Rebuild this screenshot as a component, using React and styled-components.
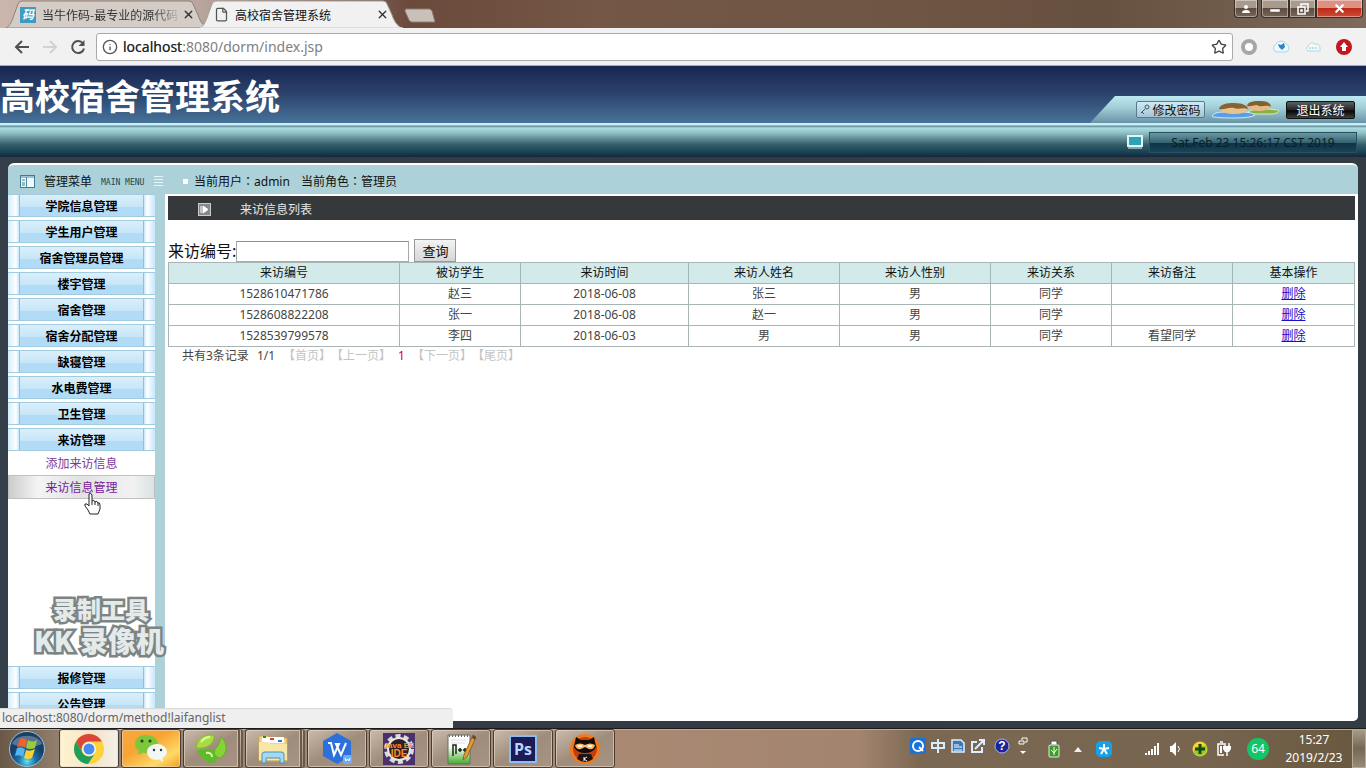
import React from "react";
import styled, { createGlobalStyle, css } from "styled-components";
import { Info, Star, X, File } from "lucide-react";

const SANS = '"Noto Sans", "Noto Sans CJK SC", sans-serif';
const CJK = '"Noto Sans CJK SC", sans-serif';

const GlobalStyle = createGlobalStyle`
  * { box-sizing: border-box; }
  body { margin: 0; font: 12px/16px ${SANS}; color: #111; background: #343c46; }
  button, input { font: inherit; color: inherit; margin: 0; }
  button { cursor: pointer; }
`;

const Screen = styled.div`
  position: relative;
  display: flex;
  flex-direction: column;
  height: 100vh;
  overflow: hidden;
`;

/* ---------- browser ---------- */
const TabStrip = styled.div`
  display: flex;
  justify-content: space-between;
  height: 28px;
  flex: none;
  background: linear-gradient(90deg, #cbb5ac 0, #b8a59c 200px, #6b4a3c 410px, #745745 600px, #6f5644 900px, #66503f 1100px, #7d6a5a 100%);
`;
const Tabs = styled.div`
  display: flex;
  padding-left: 6px;
`;
const Tab = styled.div`
  position: relative;
  z-index: ${(p) => (p.$active ? 2 : 1)};
  display: flex;
  align-items: center;
  width: 206px;
  margin-right: -12px;
  padding: 1px 17px 0 14px;
  color: ${(p) => (p.$active ? "#111" : "#333")};
  & > svg, & > span, & > button { position: relative; }
`;
const TabShape = styled.svg`
  && { position: absolute; left: 0; top: 0; }
`;
const TabTitle = styled.span`
  flex: 1;
  margin-left: 6px;
  overflow: hidden;
  white-space: nowrap;
  font-family: ${CJK};
  ${(p) => p.$fade && css`mask-image: linear-gradient(90deg, #000 80%, transparent);`}
`;
const PlainButton = styled.button`
  display: flex;
  align-items: center;
  justify-content: center;
  padding: 0;
  border: 0;
  background: none;
`;
const NewTab = styled(PlainButton)`
  margin: 8px 0 0 10px;
  height: 15px;
`;
const WindowButtons = styled.div`
  display: flex;
  align-items: flex-start;
  padding-right: 3px;
`;
const WindowButton = styled(PlainButton)`
  width: ${(p) => p.$w}px;
  height: 18px;
  margin-left: ${(p) => (p.$gap ? 3 : 0)}px;
  border: 1px solid #3b2c25;
  border-top: 0;
  box-shadow: inset 0 0 0 1px #ffffff66;
  background: ${(p) => (p.$close ? "linear-gradient(#dc9183 0 45%, #bd2a18 50%, #cf4b33)" : "linear-gradient(#a99a8e 0 45%, #5f4c40 50%, #78665a)")};
  border-radius: 0 0 ${(p) => (p.$right ? 4 : 0)}px ${(p) => (p.$left ? 4 : 0)}px;
`;
const Toolbar = styled.div`
  display: flex;
  align-items: center;
  flex: none;
  height: 38px;
  padding: 0 13px 0 14px;
  background: #f1f1f1;
  border-bottom: 1px solid #a8a8a8;
  color: #555;
`;
const NavButtons = styled.div`
  display: flex;
  gap: 12px;
  margin-right: 10px;
`;
const AddressBar = styled.label`
  display: flex;
  align-items: center;
  flex: 1;
  height: 28px;
  padding: 0 5px;
  border: 1px solid #aaa;
  border-radius: 3px;
  background: #fff;
`;
const AddressField = styled.div`
  display: grid;
  flex: 1;
  margin-left: 5px;
  font: 14px/20px "Noto Sans", sans-serif;
  & > * { grid-area: 1 / 1; }
`;
const AddressInput = styled.input`
  width: 100%;
  padding: 0;
  border: 0;
  outline: 0;
  background: none;
  color: #808080;
`;
const AddressHost = styled.span`
  color: #222;
  pointer-events: none;
`;
const Extensions = styled.div`
  display: flex;
  gap: 14px;
  margin-left: 7px;
`;

/* ---------- site header ---------- */
const Banner = styled.header`
  display: flex;
  justify-content: space-between;
  align-items: flex-end;
  flex: none;
  height: 57px;
  background: linear-gradient(#172650, #2c446d 50%, #47739a);
`;
const SiteTitle = styled.h1`
  margin: 0;
  align-self: center;
  font: bold 35px/44px ${CJK};
  color: #fff;
`;
const UserTools = styled.div`
  display: flex;
  align-items: center;
  height: 27px;
  padding: 0 11px 0 46px;
  gap: 6px;
  clip-path: polygon(25px 0, 100% 0, 100% 100%, 0 100%);
  background: linear-gradient(#bdeaf2, #a0ccd6 45%, #6793a6);
`;
const PasswordButton = styled(PlainButton)`
  width: 69px;
  height: 17px;
  gap: 2px;
  border: 1px solid #557a91;
  border-radius: 2px;
  background: linear-gradient(#d2eaf4, #a3c4d4);
  font-family: ${CJK};
`;
const LogoutButton = styled(PlainButton)`
  width: 69px;
  height: 18px;
  border: 1px solid #111;
  border-radius: 2px;
  background: linear-gradient(#5b6063, #222 50%, #050505 55%, #3c4245);
  color: #fff;
  font-family: ${CJK};
`;
const TimeBar = styled.div`
  display: flex;
  justify-content: flex-end;
  align-items: center;
  flex: none;
  height: 34px;
  padding: 4px 9px 0 0;
  gap: 6px;
  background: linear-gradient(#c6eefb 0 2px, #5e8490 3px, #a9dde2 5px, #8fbfc5 10px, #608b94 16px, #315b68 22px, #1a4256 29px, #14283a 34px);
`;
const TimeBox = styled.div`
  width: 208px;
  height: 21px;
  border: 1px solid #2c4f5c;
  background: linear-gradient(#6a98a3, #356373 50%, #0f3448 55%, #18445a);
  font: 12px/20px "Noto Sans", sans-serif;
  text-align: center;
  color: #0c1d26;
`;

/* ---------- main panel ---------- */
const Frame = styled.div`
  display: flex;
  flex: 1;
  min-height: 0;
  padding: 6px 8px 7px;
  background: linear-gradient(90deg, #343e49, #343a45 50%, #333c43);
`;
const Panel = styled.div`
  display: flex;
  flex-direction: column;
  flex: 1;
  min-width: 0;
  overflow: hidden;
  border-top: 2px solid #fff;
  border-radius: 6px 6px 5px 5px;
  background: #acd1d8;
`;
const PanelBar = styled.div`
  display: flex;
  align-items: center;
  flex: none;
  height: 29px;
  padding: 3px 12px 0;
  white-space: pre;
`;
const MenuHeading = styled.div`
  display: flex;
  align-items: center;
  width: 163px;
  font-family: ${CJK};
`;
const MenuTitle = styled.span`
  margin-left: 8px;
`;
const MenuCaption = styled.small`
  margin: 3px 10px 0 9px;
  font: 8px/10px "DejaVu Sans Mono", monospace;
  color: #23454f;
`;
const Bullet = styled.i`
  width: 5px;
  height: 5px;
  margin-right: 6px;
  background: #fff;
`;
const SessionInfo = styled.div`
  display: flex;
  gap: 11px;
`;
const Colon = styled.span`
  font-family: "Noto Sans CJK TC", sans-serif;
`;
const Columns = styled.div`
  display: flex;
  flex: 1;
  min-height: 0;
`;
const Sidebar = styled.nav`
  width: 147px;
  flex: none;
  overflow: hidden;
  background: #fff;
`;
const MenuButton = styled.button`
  display: block;
  width: 100%;
  height: 23px;
  margin-bottom: 3px;
  padding: 0 11px;
  border: solid #a3cbe0;
  border-width: 1px 0;
  background: linear-gradient(90deg, #d3ecfc, #fff 8px, #c3e5fa 11px, #c3e5fa 136px, #fff 139px, #c8e7fb);
`;
const MenuLabel = styled.span`
  display: block;
  height: 21px;
  border: solid #8fc0e2;
  border-width: 0 1px;
  background: linear-gradient(#dbeffa, #c6e6f8 55%, #b2dbf5 60%, #b0dcf8);
  font: bold 12px/21px ${CJK};
  color: #000;
`;
const SubMenu = styled.div`
  height: 215px;
  margin-top: -3px;
`;
const SubLink = styled.a`
  display: block;
  height: 24px;
  border: 1px solid ${(p) => (p.$hover ? "#c0c0c0" : "transparent")};
  background: ${(p) => (p.$hover ? "linear-gradient(90deg, #ccc, #f4f4f4 20%, #e2e2e2 50%, #f2f2f2 85%, #d9e3e4)" : "none")};
  font: 12px/22px ${CJK};
  text-align: center;
  text-decoration: none;
  color: ${(p) => (p.$hover ? "#76209a" : "#7d3a96")};
`;
const Content = styled.main`
  flex: 1;
  min-width: 0;
  margin-left: 10px;
  padding: 2px 3px;
  background: #fff;
`;
const ListTitle = styled.h2`
  display: flex;
  align-items: center;
  gap: 29px;
  height: 24px;
  margin: 0 0 19px;
  padding: 2px 0 0 30px;
  background: #35393c;
  color: #e4e8e8;
  font: 12px/16px ${CJK};
`;
const SearchForm = styled.form`
  display: flex;
  align-items: flex-end;
  height: 23px;
  font: 16px/24px ${CJK};
`;
const SearchInput = styled.input`
  width: 173px;
  height: 21px;
  border: 1px solid #a9a9a9;
  border-top-color: #8f8f8f;
`;
const SearchButton = styled.button`
  width: 42px;
  height: 23px;
  margin-left: 5px;
  padding: 0;
  border: 1px solid #999;
  background: linear-gradient(#f3f3f3, #d6d6d6);
  font: 13px/20px ${CJK};
`;
const VisitTable = styled.table`
  width: 100%;
  table-layout: fixed;
  border-collapse: collapse;
  text-align: center;
  color: #444;
`;
const Cell = styled.td`
  height: 21px;
  padding: 0;
  border: 1px solid #a9b4b4;
  line-height: 20px;
`;
const HeadCell = styled(Cell)`
  font-weight: normal;
  color: #111;
  background: #d2ebea;
`;
const DeleteLink = styled.a`
  color: #1a0dcc;
  text-decoration: underline;
`;
const Pager = styled.div`
  display: flex;
  padding: 0 14px;
  line-height: 18px;
  color: #444;
  white-space: pre;
`;
const PagerText = styled.span`
  width: ${(p) => p.$w}px;
  color: ${(p) => (p.$current ? "#d80040" : p.$off ? "#c4c4c4" : "inherit")};
`;

/* ---------- overlays ---------- */
const StatusBubble = styled.div`
  position: absolute;
  left: 0;
  bottom: 40px;
  width: 453px;
  height: 20px;
  padding-left: 2px;
  border-top: 1px solid #d8d8d8;
  border-radius: 0 4px 0 0;
  background: #efefef;
  color: #666;
  line-height: 18px;
`;
const Watermark = styled.div`
  position: absolute;
  left: 34px;
  top: 594px;
  display: flex;
  flex-direction: column;
  font: 900 24px/30px ${CJK};
  color: #e4eaea;
  -webkit-text-stroke: 5px #7d8484;
  stroke-linejoin: round;
  paint-order: stroke fill;
  white-space: nowrap;
`;
const WatermarkLine = styled.span`
  padding-left: ${(p) => (p.$big ? 0 : 19)}px;
  font-size: ${(p) => (p.$big ? 28 : 24)}px;
  line-height: ${(p) => (p.$big ? 32 : 30)}px;
`;
const Pointer = styled.svg`
  position: absolute;
  left: 83px;
  top: 492px;
`;

/* ---------- taskbar ---------- */
const Taskbar = styled.footer`
  display: flex;
  flex: none;
  height: 40px;
  border-top: 1px solid #1d1a18;
  box-shadow: inset 0 1px 0 #bba99a;
  background: linear-gradient(90deg, #6a5848 0, #93806f 60px, #a58d79 500px, #a98972 620px, #a3846f 860px, #7b6852 920px, #776550 1200px, #69583f 100%);
`;
const StartButton = styled(PlainButton)`
  width: 57px;
  padding-right: 3px;
`;
const TaskButton = styled(PlainButton)`
  width: 60px;
  height: 39px;
  margin-left: 2px;
  border: 1px solid #4a3c31;
  border-radius: 3px;
  box-shadow: inset 0 0 0 1px #e4d8cc99;
  background: ${(p) => (p.$tone === "active" ? "linear-gradient(90deg, #fff3cf, #f3e4c9 60%, #f4f1ea)" : p.$tone === "alert" ? "linear-gradient(150deg, #f9a83e, #f7a433 40%, #ffd968 75%, #f19f22)" : "linear-gradient(150deg, #c9bcae, #a08c7a 50%, #a89482)")};
  ${(p) => p.$stack && css`border-right: 5px double #6b594a;`}
`;
const Tray = styled.div`
  display: flex;
  align-items: center;
  margin-left: auto;
  color: #fff;
`;
const TrayIcons = styled.div`
  display: flex;
  align-items: center;
  gap: ${(p) => p.$gap}px;
  margin-right: ${(p) => p.$after}px;
  padding-bottom: ${(p) => p.$lift || 0}px;
`;
const Battery = styled.span`
  width: 22px;
  height: 22px;
  margin-right: 15px;
  border-radius: 50%;
  background: #12c566;
  font: 12px/22px "Noto Sans", sans-serif;
  text-align: center;
`;
const Clock = styled.time`
  width: 60px;
  margin-right: 8px;
  font: 12px/18px "Noto Sans", sans-serif;
  text-align: center;
`;
const ShowDesktop = styled(PlainButton)`
  align-self: stretch;
  width: 14px;
  border: 1px solid #b7aa99;
  background: linear-gradient(#a59c8b, #746853 50%, #968b78);
`;

const TabOutline = ({ fill, stroke }) => (
  <TabShape width="208" height="28" aria-hidden="true">
    <path d="M0 28C4 26 6 21 8 15L12 4Q13 1 16 1H183Q186 1 187 4L192 15C194 21 197 26 202 28Z" fill={fill} stroke={stroke} />
    {fill === "#f1f1f1" && <path d="M0 28H203" stroke="#f1f1f1" />}
  </TabShape>
);

const UsersArt = () => (
  <svg width="69" height="20" viewBox="0 0 69 20" aria-hidden="true">
    <path d="M34 14Q38 9 52 9Q66 9 68 11Q68 13 62 14Z" fill="#8bb043" stroke="#d9ecb4" />
    <ellipse cx="48" cy="7" rx="11" ry="4" fill="#e3bd85" />
    <path d="M36 6C37 1 44 1 50 1C57 1 60 4 60 7C55 4 50 8 46 5C42 5 40 7 36 6Z" fill="#85602f" />
    <path d="M1 16Q3 12 13 12H34Q43 13 44 15Q40 18 22 18Q2 18 1 16Z" fill="#5a9fe6" stroke="#cfe8fb" />
    <ellipse cx="23" cy="10" rx="13" ry="4" fill="#e8c38e" />
    <path d="M8 9C9 4 16 3 23 3C32 3 37 6 37 9C32 7 27 10 23 8C17 7 14 10 8 9Z" fill="#8a6231" />
  </svg>
);

const icons = {
  windows: (
    <svg width="38" height="38" viewBox="0 0 38 38">
      <defs><radialGradient id="orb" cx="50%" cy="85%"><stop offset="0" stopColor="#5fe3f5" /><stop offset=".5" stopColor="#1d6fa6" /><stop offset="1" stopColor="#173f68" /></radialGradient></defs>
      <circle cx="19" cy="19" r="17.500" fill="url(#orb)" stroke="#9fc0d6" />
      <path d="M4 14C7 3 31 3 34 14C26 18 13 18 4 14Z" fill="#fff" opacity=".28" />
      <path d="M12 9Q15 7 19 10L17 18Q14 15 9 17Z" fill="#f0622a" />
      <path d="M20 10Q24 13 29 10L27 18Q22 20 18 18Z" fill="#9bcc3a" />
      <path d="M9 18Q13 16 17 19L15 27Q12 24 7 26Z" fill="#54b5f0" />
      <path d="M18 20Q22 22 27 19L24 28Q20 30 16 28Z" fill="#fcd02f" />
    </svg>
  ),
  chrome: (
    <svg width="32" height="32" viewBox="0 0 32 32">
      <circle cx="16" cy="16" r="15" fill="#fdd23b" />
      <path d="M3 8.500A15 15 0 0 1 29 8.500H16A7.500 7.500 0 0 0 9.500 19.700Z" fill="#dc4537" />
      <path d="M3 8.500A15 15 0 0 0 15 31L22.500 19.700A7.500 7.500 0 0 1 9.500 19.700Z" fill="#1f9f5c" />
      <circle cx="16" cy="16" r="7" fill="#f6f6f6" /><circle cx="16" cy="16" r="5.500" fill="#4a8bf0" />
    </svg>
  ),
  wechat: (
    <svg width="34" height="30" viewBox="0 0 34 30">
      <path d="M12 1C5 1 1 5 1 10C1 13 3 16 5 17L4 21L9 18.500C18 21 24 16 24 10C24 5 19 1 12 1Z" fill="#7bc83a" />
      <path d="M23 10C17 10 13 14 13 18C13 23 18 27 25 25.500L29 28L28.500 24C31 23 33 20 33 18C33 13 28 10 23 10Z" fill="#f4f6f4" />
      <g fill="#2b3b1c"><circle cx="8" cy="7" r="1.500" /><circle cx="16" cy="7" r="1.500" /><circle cx="20" cy="16" r="1.200" /><circle cx="27" cy="16" r="1.200" /></g>
    </svg>
  ),
  sprout: (
    <svg width="34" height="32" viewBox="0 0 34 32">
      <path d="M2 15C3 6 10 1 18 2C21 2 21 6 17 11Q12 16 2 15Z" fill="#a7dc42" stroke="#7ebc2b" />
      <path d="M2 18C8 16 15 15 20 17C26 20 24 28 19 30C13 31 10 25 2 18Z" fill="#5dbb28" />
      <path d="M27 4C33 9 35 20 26 25C19 23 19 18 23 14Q26 10 27 4Z" fill="#86d335" stroke="#68ad2a" />
      <path d="M7 9Q11 4 16 4M12 20Q18 19 18 24" stroke="#dff8a8" strokeWidth="2" fill="none" />
    </svg>
  ),
  folder: (
    <svg width="34" height="32" viewBox="0 0 34 32">
      <path d="M3 3H12L14 5H31V28H3Z" fill="#efd682" stroke="#c9a956" />
      <path d="M6 4H28V10H6Z" fill="#fff" />
      <path d="M7 4H10" stroke="#258b48" strokeWidth="2" /><path d="M14 6H18" stroke="#d2402a" strokeWidth="2" /><path d="M22 8H26" stroke="#2d7fca" strokeWidth="2" />
      <path d="M3 9H12L14 11H31V27H3Z" fill="#f8e7a4" />
      <path d="M6 30V21Q6 19 9 19H25Q28 19 28 21V30H24V25H10V30Z" fill="#a5d8f3" stroke="#4c91bd" />
    </svg>
  ),
  wps: (
    <svg width="32" height="34" viewBox="0 0 32 34">
      <path d="M16 1L30 9V24L16 32L2 24V9Z" fill="#2b70db" />
      <path d="M7 11H10L13 23L18 12H15L20 23L25 11" fill="none" stroke="#fff" strokeWidth="2" />
      <rect x="22" y="23" width="9" height="9" rx="2" fill="#6daef8" /><path d="M24 26L25 29L26.500 27L28 29L29 26" fill="none" stroke="#fff" />
    </svg>
  ),
  eclipse: (
    <svg width="32" height="32" viewBox="0 0 32 32">
      <rect width="32" height="32" fill="#49316c" />
      <circle cx="16" cy="16" r="13" fill="none" stroke="#dadada" strokeWidth="4" strokeDasharray="5 3.200" />
      <circle cx="16" cy="16" r="11" fill="#292124" stroke="#e7e7e7" strokeWidth="2" />
      <text x="16" y="15" textAnchor="middle" fontFamily="Liberation Sans" fontSize="8" fontWeight="bold" fill="#ff8a22">Java EE</text>
      <text x="16" y="24" textAnchor="middle" fontFamily="Liberation Sans" fontSize="10" fontWeight="bold" fill="#ff8a22">IDE</text>
    </svg>
  ),
  notepad: (
    <svg width="32" height="34" viewBox="0 0 32 34">
      <defs><linearGradient id="page" x2="0" y2="1"><stop offset=".4" stopColor="#fff" /><stop offset="1" stopColor="#41ad28" /></linearGradient></defs>
      <path d="M3 3H25V32H3Z" fill="url(#page)" stroke="#637060" /><path d="M4 4H24" stroke="#666" strokeWidth="2" strokeDasharray="1 2" />
      <path d="M6 8H21M6 11H20" stroke="#d5dee4" />
      <path d="M8 24V13H11V22M13 18H17M15 16V20M18 18H22M20 16V20" stroke="#182714" strokeWidth="1.500" fill="none" />
      <path d="M28 3L31 5L22 25L18 28L19 23Z" fill="#e99c2c" stroke="#8f6429" /><path d="M28 3L31 5L30 8L27 6Z" fill="#62483d" />
    </svg>
  ),
  photoshop: (
    <svg width="28" height="28" viewBox="0 0 28 28">
      <rect width="28" height="28" rx="1" fill="#8dbdef" /><rect x="2" y="2" width="24" height="24" fill="#1c1b57" />
      <text x="14" y="20" textAnchor="middle" fontFamily="Open Sans" fontSize="16" fontWeight="bold" fill="#b3d8fb">Ps</text>
    </svg>
  ),
  kk: (
    <svg width="32" height="32" viewBox="0 0 32 32">
      <circle cx="16" cy="16" r="15" fill="#f47a1b" /><circle cx="16" cy="16" r="12" fill="#c0400f" />
      <path d="M6 9L7 4L12 7H20L25 4L26 9L27 14Q24 20 16 20Q8 20 5 14Z" fill="#120e0c" />
      <path d="M6 12Q11 9 16 12Q21 9 26 12Q25 17 20 16L16 14L12 16Q7 17 6 12Z" fill="#ffb66a" />
      <path d="M9 13H13M19 13H23" stroke="#fff" strokeWidth="2" />
      <path d="M10 21H22L24 26Q16 32 8 26Z" fill="#221311" /><path d="M15 24V28M18 24L15 26L18 28" stroke="#fff" strokeWidth="1" />
    </svg>
  ),
};

const tasks = [
  ["Chrome", "chrome", "active"], ["微信", "wechat", "alert"], ["浏览器", "sprout", "", true], ["资源管理器", "folder", "", true],
  ["WPS", "wps"], ["Eclipse", "eclipse"], ["Notepad++", "notepad"], ["Photoshop", "photoshop"], ["KK", "kk"],
];
const menuTop = ["学院信息管理", "学生用户管理", "宿舍管理员管理", "楼宇管理", "宿舍管理", "宿舍分配管理", "缺寝管理", "水电费管理", "卫生管理", "来访管理"];
const menuBottom = ["报修管理", "公告管理"];
const columns = [["来访编号", 231], ["被访学生", 121], ["来访时间", 168], ["来访人姓名", 151], ["来访人性别", 151], ["来访关系", 121], ["来访备注", 121], ["基本操作", 122]];
const columnTotal = columns.reduce((sum, c) => sum + c[1], 0);
const visits = [
  ["1528610471786", "赵三", "2018-06-08", "张三", "男", "同学", ""],
  ["1528608822208", "张一", "2018-06-08", "赵一", "男", "同学", ""],
  ["1528539799578", "李四", "2018-06-03", "男", "男", "同学", "看望同学"],
];

const MenuItem = ({ label }) => (
  <MenuButton type="button"><MenuLabel>{label}</MenuLabel></MenuButton>
);

const BrowserChrome = () => (
  <>
    <TabStrip>
      <Tabs>
        <Tab>
          <TabOutline fill="#d4ccc7" stroke="#8f827b" />
          <svg width="16" height="16" viewBox="0 0 16 16" aria-hidden="true">
            <rect width="16" height="16" fill="#3f9cc0" />
            <text x="8" y="12" textAnchor="middle" fontFamily="Noto Sans CJK SC" fontSize="12" fontStyle="italic" fontWeight="bold" fill="#fff">码</text>
          </svg>
          <TabTitle $fade>当牛作码-最专业的源代码</TabTitle>
          <PlainButton aria-label="关闭"><X size={13} color="#333" strokeWidth={2.5} /></PlainButton>
        </Tab>
        <Tab $active>
          <TabOutline fill="#f1f1f1" stroke="#a8a09b" />
          <File size={15} color="#555" strokeWidth={2} />
          <TabTitle>高校宿舍管理系统</TabTitle>
          <PlainButton aria-label="关闭"><X size={13} color="#333" strokeWidth={2.5} /></PlainButton>
        </Tab>
        <NewTab aria-label="新标签页">
          <svg width="32" height="15"><path d="M2 1H25Q27 1 28 3L31 14H8Q6 14 5 12L1 3Q1 1 2 1Z" fill="#c9c0ba" stroke="#8d7c72" /></svg>
        </NewTab>
      </Tabs>
      <WindowButtons>
        <WindowButton $w={24} $left $right aria-label="用户">
          <svg width="10" height="10"><circle cx="5" cy="3" r="2" fill="#fff" /><path d="M1 9Q1 6 5 6Q9 6 9 9Z" fill="#fff" /></svg>
        </WindowButton>
        <WindowButton $w={28} $gap $left aria-label="最小化">
          <svg width="12" height="10"><rect x="1" y="5" width="10" height="3" fill="#fff" stroke="#555" strokeWidth=".5" /></svg>
        </WindowButton>
        <WindowButton $w={27} aria-label="还原">
          <svg width="12" height="12" fill="none" stroke="#fff" strokeWidth="1.500"><path d="M4 3V1H11V8H9" /><rect x="1" y="4" width="7" height="7" /><rect x="4" y="7" width="1" height="1" /></svg>
        </WindowButton>
        <WindowButton $w={47} $close $right aria-label="关闭">
          <X size={13} color="#fff" strokeWidth={4} />
        </WindowButton>
      </WindowButtons>
    </TabStrip>
    <Toolbar>
      <NavButtons>
        <PlainButton aria-label="后退"><svg width="16" height="16" fill="none" stroke="#505050" strokeWidth="2"><path d="M8 2L2 8L8 14M2 8H15" /></svg></PlainButton>
        <PlainButton aria-label="前进"><svg width="16" height="16" fill="none" stroke="#d2d2d2" strokeWidth="2"><path d="M8 2L14 8L8 14M14 8H1" /></svg></PlainButton>
        <PlainButton aria-label="刷新"><svg width="16" height="16" fill="none" stroke="#505050" strokeWidth="2"><path d="M13 4.500A6 6 0 1 0 14 9.500" /><path d="M14.500 1V7H8.500Z" fill="#505050" stroke="none" /></svg></PlainButton>
      </NavButtons>
      <AddressBar>
        <Info size={16} />
        <AddressField>
          <AddressInput aria-label="地址" defaultValue="localhost:8080/dorm/index.jsp" />
          <AddressHost aria-hidden="true">localhost</AddressHost>
        </AddressField>
        <Star size={16} color="#444" strokeWidth={2} />
      </AddressBar>
      <Extensions>
        <svg width="18" height="18"><circle cx="9" cy="9" r="6" fill="#fff" stroke="#a6a6a6" strokeWidth="4" /></svg>
        <svg width="18" height="18"><path d="M5 14A4 4 0 0 1 3 7Q5 3 9 3Q13 3 14 6Q17 7 17 10Q17 13 14 14Z" fill="#eef9fb" stroke="#a7d8e4" /><path d="M6 6L9 7L12 5L13 9L10 12L7 9Z" fill="#2e84c4" /></svg>
        <svg width="18" height="18"><path d="M4 13A3 3 0 0 1 4 8Q7 3 11 6Q16 6 16 10V13Z" fill="#f2fafa" stroke="#a9dce3" /><path d="M5 10H14" stroke="#7cc5ce" strokeDasharray="2 1" /></svg>
        <svg width="17" height="18"><circle cx="8" cy="9" r="8" fill="#c3161f" /><path d="M8 4L12 9H10V13H6V9H4Z" fill="#fff" /></svg>
      </Extensions>
    </Toolbar>
  </>
);

const SiteHeader = () => (
  <>
    <Banner>
      <SiteTitle>高校宿舍管理系统</SiteTitle>
      <UserTools>
        <PasswordButton type="button">
          <svg width="10" height="11" fill="none" stroke="#42586a"><circle cx="7" cy="3" r="2" /><path d="M5 5L1 9M2 8L4 10" /></svg>
          修改密码
        </PasswordButton>
        <UsersArt />
        <LogoutButton type="button">退出系统</LogoutButton>
      </UserTools>
    </Banner>
    <TimeBar>
      <svg width="16" height="14"><rect x="1" y="1" width="14" height="10" fill="#2ba3ba" stroke="#e6f4ef" strokeWidth="2" /><path d="M1 13H15" stroke="#e6f4ef" /></svg>
      <TimeBox>Sat.Feb 23 15:26:17 CST 2019</TimeBox>
    </TimeBar>
  </>
);

const VisitList = () => (
  <Content>
    <ListTitle>
      <svg width="13" height="13"><rect x=".5" y=".5" width="12" height="12" fill="#85898b" stroke="#c9cccd" /><path d="M3 3V10M5 3L10 6.500L5 10Z" fill="#fff" stroke="#fff" /></svg>
      来访信息列表
    </ListTitle>
    <SearchForm onSubmit={(e) => e.preventDefault()}>
      <label htmlFor="visitNo">来访编号:</label>
      <SearchInput id="visitNo" type="text" />
      <SearchButton type="submit">查询</SearchButton>
    </SearchForm>
    <VisitTable>
      <colgroup>
        {columns.map(([name, w]) => <col key={name} style={{ width: `${(w / columnTotal) * 100}%` }} />)}
      </colgroup>
      <thead>
        <tr>{columns.map(([name]) => <HeadCell as="th" key={name}>{name}</HeadCell>)}</tr>
      </thead>
      <tbody>
        {visits.map((row) => (
          <tr key={row[0]}>
            {row.map((value, i) => <Cell key={i}>{value}</Cell>)}
            <Cell><DeleteLink href="#delete">删除</DeleteLink></Cell>
          </tr>
        ))}
      </tbody>
    </VisitTable>
    <Pager>
      <PagerText $w={75}>共有3条记录</PagerText>
      <PagerText $w={26}>1/1</PagerText>
      <PagerText $w={48} $off>【首页】</PagerText>
      <PagerText $w={67} $off>【上一页】</PagerText>
      <PagerText $w={14} $current>1</PagerText>
      <PagerText $w={60} $off>【下一页】</PagerText>
      <PagerText $w={48} $off>【尾页】</PagerText>
    </Pager>
  </Content>
);

const SystemTray = () => (
  <Tray>
    <TrayIcons $gap={4} $after={18} $lift={5}>
      <svg width="16" height="16"><rect width="16" height="16" rx="2" fill="#1673dc" /><circle cx="8" cy="8" r="5" fill="none" stroke="#fff" strokeWidth="2" /><path d="M9 9L13 13" stroke="#fff" strokeWidth="2" /></svg>
      <svg width="16" height="16" fill="none" stroke="#d8ecff" strokeWidth="2"><path d="M2 5H14V10H2ZM8 1V15" /></svg>
      <svg width="16" height="16"><path d="M2 2H11L14 5V14H2Z" fill="#3c78b6" stroke="#dceeff" strokeWidth="1.500" /><path d="M4 7H9M4 9H12M4 12H12" stroke="#fff" /></svg>
      <svg width="16" height="16" fill="none" stroke="#dceeff" strokeWidth="2"><path d="M7 4H2V14H12V9M5 11L13 3M9 2H14V7" /></svg>
      <svg width="20" height="16"><circle cx="12" cy="8" r="7" fill="#1b2598" stroke="#aab2ed" /><text x="12" y="12" textAnchor="middle" fontFamily="Liberation Sans" fontSize="12" fontWeight="bold" fill="#fff">?</text></svg>
      <svg width="16" height="18" fill="none" stroke="#fff"><path d="M8 3V1H13V5H11M5 4H10V7H5Z" /><path d="M6 14H12L9 17Z" fill="#fff" stroke="none" /></svg>
    </TrayIcons>
    <TrayIcons $gap={14} $after={32}>
      <svg width="12" height="18"><rect x="3" y="1" width="6" height="4" fill="#fff" stroke="#555" /><rect x="1" y="5" width="10" height="12" rx="1" fill="#3f9c2b" stroke="#dfeedd" /><path d="M6 7V15M3 10L6 13L9 9" stroke="#fff" fill="none" /></svg>
      <svg width="8" height="6"><path d="M0 6L4 1L8 6Z" fill="#eee" /></svg>
      <svg width="16" height="16"><path d="M3 0H13L16 3V13L13 16H3L0 13V3Z" fill="#18a0e6" /><path d="M8 8V3M8 8L3 7M8 8L13 7M8 8L5 13M8 8L11 13" stroke="#fff" strokeWidth="2" /></svg>
    </TrayIcons>
    <TrayIcons $gap={9} $after={16}>
      <svg width="16" height="14" stroke="#fff" strokeWidth="2"><path d="M2 13V11M5 13V9M8 13V7M11 13V4M14 13V1" /></svg>
      <svg width="14" height="16"><path d="M1 5H3L7 1V15L3 11H1Z" fill="#fff" /><path d="M9 5Q12 8 9 11" stroke="#fff" fill="none" /></svg>
      <svg width="16" height="16"><circle cx="8" cy="8" r="7.500" fill="#f3d52b" /><path d="M1 12Q5 3 15 5Q15 15 7 15Z" fill="#9acb28" /><path d="M8 3V13M3 8H13" stroke="#174a12" strokeWidth="3" /></svg>
      <svg width="14" height="16"><path d="M7 14H1V3H7M3 1H6" fill="none" stroke="#fff" strokeWidth="1.500" /><path d="M4 5V12" stroke="#fff" strokeWidth="2" /><path d="M8 2V5M12 2V5M10 10V15" stroke="#fff" strokeWidth="1.500" /><path d="M6 5H14V8L12 11H8L6 8Z" fill="#fff" /></svg>
    </TrayIcons>
    <Battery>64</Battery>
    <Clock>15:27<br />2019/2/23</Clock>
    <ShowDesktop aria-label="显示桌面" />
  </Tray>
);

export default function App() {
  return (
    <Screen>
      <GlobalStyle />
      <BrowserChrome />
      <SiteHeader />
      <Frame>
        <Panel>
          <PanelBar>
            <MenuHeading>
              <svg width="16" height="13"><rect x=".5" y=".5" width="14" height="12" fill="#eef9fb" stroke="#3d7d98" /><path d="M1 2H14M6.500 2V12" stroke="#4b8aa3" /><path d="M2 5H5M2 8H5M2 10H5" stroke="#3d7d98" /></svg>
              <MenuTitle>管理菜单</MenuTitle>
              <MenuCaption>MAIN MENU</MenuCaption>
              <svg width="10" height="10" stroke="#e5f5f6"><path d="M0 .5H9M0 3.500H9M0 6.500H9M0 9.500H9" /></svg>
            </MenuHeading>
            <Bullet />
            <SessionInfo>
              <span>当前用户<Colon>：</Colon>admin</span>
              <span>当前角色<Colon>：</Colon>管理员</span>
            </SessionInfo>
          </PanelBar>
          <Columns>
            <Sidebar>
              {menuTop.map((label) => <MenuItem key={label} label={label} />)}
              <SubMenu>
                <SubLink href="#add">添加来访信息</SubLink>
                <SubLink href="#list" $hover>来访信息管理</SubLink>
              </SubMenu>
              {menuBottom.map((label) => <MenuItem key={label} label={label} />)}
            </Sidebar>
            <VisitList />
          </Columns>
        </Panel>
      </Frame>
      <Taskbar>
        <StartButton aria-label="开始">{icons.windows}</StartButton>
        {tasks.map(([name, icon, tone, stack]) => (
          <TaskButton key={name} aria-label={name} $tone={tone} $stack={stack}>{icons[icon]}</TaskButton>
        ))}
        <SystemTray />
      </Taskbar>
      <StatusBubble>localhost:8080/dorm/method!laifanglist</StatusBubble>
      <Watermark>
        <WatermarkLine>录制工具</WatermarkLine>
        <WatermarkLine $big>KK 录像机</WatermarkLine>
      </Watermark>
      <Pointer width="18" height="24" viewBox="0 0 18 24" aria-hidden="true">
        <path d="M6 2Q8 0 9 3V9Q11 7 12 10Q14 8 15 11Q17 10 17 13V17L15 22H7L5 18L2 14Q1 11 4 12L6 14Z" fill="#fff" stroke="#222" />
        <path d="M9 9V13M12 10V13M15 11V14" stroke="#222" />
      </Pointer>
    </Screen>
  );
}
